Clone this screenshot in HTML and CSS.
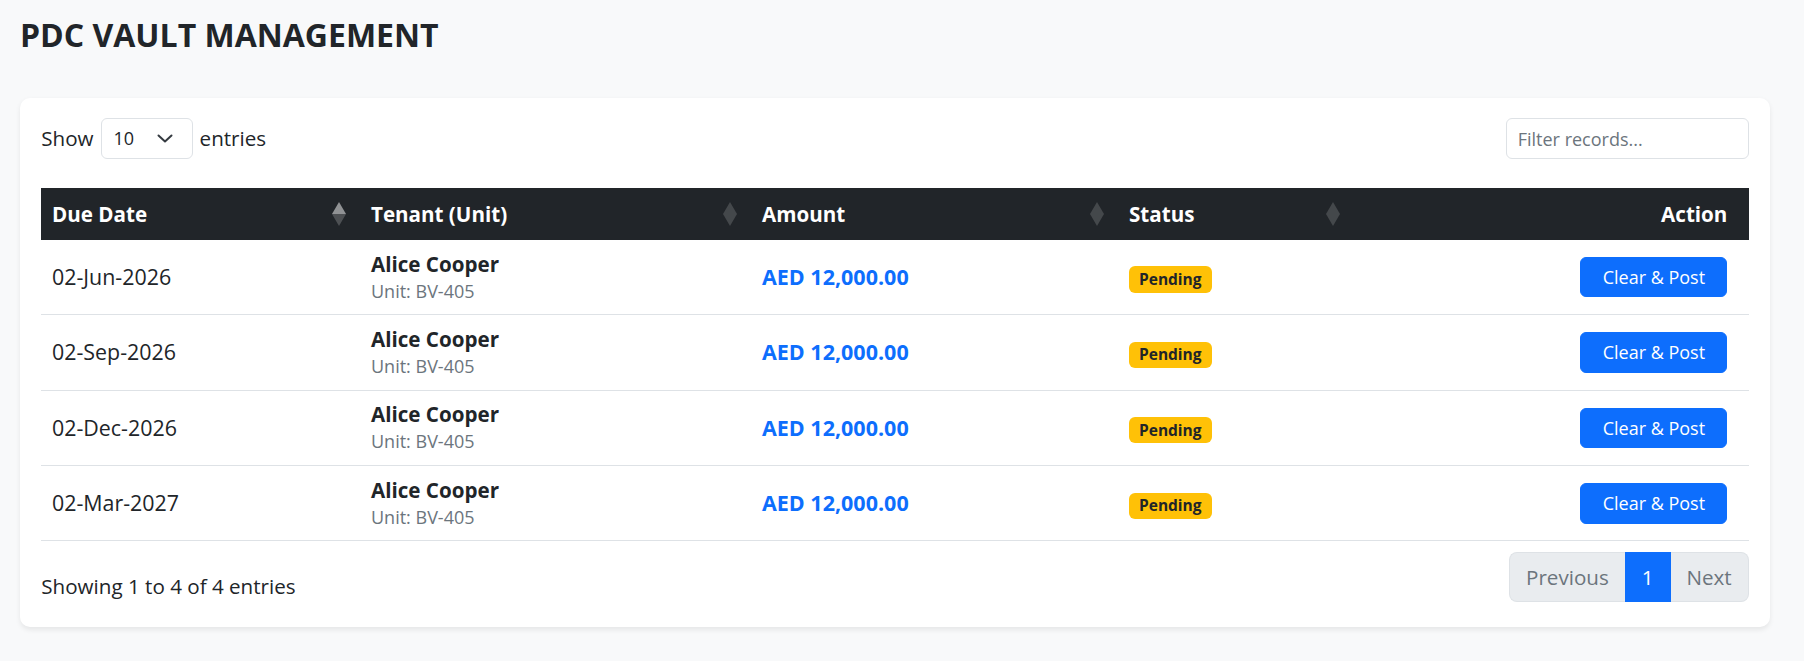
FILE: index.html
```html
<!DOCTYPE html>
<html lang="en">
<head>
<meta charset="utf-8">
<title>PDC Vault Management</title>
<link rel="stylesheet" href="styles.css">
</head>
<body>
<main class="page">
  <h1 class="page-title">PDC VAULT MANAGEMENT</h1>

  <section class="card">
    <div class="toolbar">
      <div class="length">
        <span>Show</span>
        <div class="select">
          <span>10</span>
          <svg class="chevron" width="16" height="9" viewBox="0 0 16 9" aria-hidden="true">
            <path d="M1.5 1.5 L8 7.5 L14.5 1.5" fill="none" stroke="#343a40" stroke-width="2" stroke-linecap="round" stroke-linejoin="round"/>
          </svg>
        </div>
        <span>entries</span>
      </div>
      <input class="filter" type="search" placeholder="Filter records...">
    </div>

    <table class="vault">
      <colgroup>
        <col class="col-date">
        <col class="col-tenant">
        <col class="col-amount">
        <col class="col-status">
        <col class="col-action">
      </colgroup>
      <thead>
        <tr>
          <th class="sortable">
            <div class="th-inner">
              <span>Due Date</span>
              <svg class="sort asc" width="14" height="24" viewBox="0 0 14 24" aria-hidden="true">
                <polygon class="up" points="7,0 14,12 0,12"/>
                <polygon class="down" points="0,12 14,12 7,24"/>
              </svg>
            </div>
          </th>
          <th class="sortable">
            <div class="th-inner">
              <span>Tenant (Unit)</span>
              <svg class="sort" width="14" height="24" viewBox="0 0 14 24" aria-hidden="true">
                <polygon class="up" points="7,0 14,12 0,12"/>
                <polygon class="down" points="0,12 14,12 7,24"/>
              </svg>
            </div>
          </th>
          <th class="sortable">
            <div class="th-inner">
              <span>Amount</span>
              <svg class="sort" width="14" height="24" viewBox="0 0 14 24" aria-hidden="true">
                <polygon class="up" points="7,0 14,12 0,12"/>
                <polygon class="down" points="0,12 14,12 7,24"/>
              </svg>
            </div>
          </th>
          <th class="sortable">
            <div class="th-inner">
              <span>Status</span>
              <svg class="sort" width="14" height="24" viewBox="0 0 14 24" aria-hidden="true">
                <polygon class="up" points="7,0 14,12 0,12"/>
                <polygon class="down" points="0,12 14,12 7,24"/>
              </svg>
            </div>
          </th>
          <th class="action">Action</th>
        </tr>
      </thead>
      <tbody>
        <tr>
          <td class="date">02-Jun-2026</td>
          <td><div class="tenant">Alice Cooper</div><div class="unit">Unit: BV-405</div></td>
          <td class="amount">AED 12,000.00</td>
          <td><span class="badge">Pending</span></td>
          <td class="action"><button class="btn" type="button">Clear &amp; Post</button></td>
        </tr>
        <tr>
          <td class="date">02-Sep-2026</td>
          <td><div class="tenant">Alice Cooper</div><div class="unit">Unit: BV-405</div></td>
          <td class="amount">AED 12,000.00</td>
          <td><span class="badge">Pending</span></td>
          <td class="action"><button class="btn" type="button">Clear &amp; Post</button></td>
        </tr>
        <tr>
          <td class="date">02-Dec-2026</td>
          <td><div class="tenant">Alice Cooper</div><div class="unit">Unit: BV-405</div></td>
          <td class="amount">AED 12,000.00</td>
          <td><span class="badge">Pending</span></td>
          <td class="action"><button class="btn" type="button">Clear &amp; Post</button></td>
        </tr>
        <tr>
          <td class="date">02-Mar-2027</td>
          <td><div class="tenant">Alice Cooper</div><div class="unit">Unit: BV-405</div></td>
          <td class="amount">AED 12,000.00</td>
          <td><span class="badge">Pending</span></td>
          <td class="action"><button class="btn" type="button">Clear &amp; Post</button></td>
        </tr>
      </tbody>
    </table>

    <div class="footer">
      <div class="info">Showing 1 to 4 of 4 entries</div>
      <nav class="pager" aria-label="Pagination">
        <span class="page-item disabled first">Previous</span>
        <span class="page-item active">1</span>
        <span class="page-item disabled last">Next</span>
      </nav>
    </div>
  </section>
</main>
</body>
</html>
```

FILE: styles.css
```css
* {
  box-sizing: border-box;
}

html,
body {
  margin: 0;
  padding: 0;
}

body {
  background: #f8f9fa;
  color: #212529;
  font-family: "Open Sans", "Noto Sans", "Liberation Sans", sans-serif;
  font-size: 20.6px;
  line-height: 1.5;
}

.page {
  padding: 16px 34px 30px 20px;
}

.page-title {
  margin: 0 0 44px 0;
  font-size: 32px;
  font-weight: 700;
  line-height: 1.2;
  letter-spacing: 0;
}

/* card */
.card {
  background: #fff;
  border-radius: 10px;
  box-shadow: 0 2.7px 5.3px rgba(0, 0, 0, 0.075);
  padding: 20px 21.3px 25px 21.3px;
}

/* length menu + search */
.toolbar {
  display: flex;
  justify-content: space-between;
  align-items: center;
  margin-bottom: 28.5px;
}

.length {
  display: flex;
  align-items: center;
  gap: 7px;
}

.select {
  width: 92px;
  height: 41px;
  display: flex;
  align-items: center;
  justify-content: space-between;
  padding: 0 19px 0 12px;
  border: 1px solid #dee2e6;
  border-radius: 6px;
  background: #fff;
  font-size: 18px;
}

.chevron {
  display: block;
}

.filter {
  width: 243px;
  height: 41px;
  padding: 0 11px;
  border: 1px solid #dee2e6;
  border-radius: 6px;
  font-family: inherit;
  font-size: 18px;
  color: #212529;
  background: #fff;
  outline: none;
}

.filter::placeholder {
  color: #6c757d;
}

/* table */
.vault {
  width: 100%;
  border-collapse: collapse;
  table-layout: fixed;
}

.col-date { width: 319px; }
.col-tenant { width: 391px; }
.col-amount { width: 367px; }
.col-status { width: 236px; }

.vault th {
  background: #212529;
  color: #fff;
  font-weight: 700;
  text-align: left;
  line-height: 32px;
  padding: 10px 10.7px;
  white-space: nowrap;
}

.vault th.sortable {
  padding-right: 14.6px;
}

.th-inner {
  display: flex;
  align-items: center;
  justify-content: space-between;
}

.sort {
  display: block;
  flex: none;
}

.sort polygon {
  fill: rgba(255, 255, 255, 0.16);
}

.sort.asc .up {
  fill: rgba(255, 255, 255, 0.5);
}

.sort.asc .down {
  fill: rgba(255, 255, 255, 0.2);
}

.vault td {
  padding: 10.7px;
  vertical-align: middle;
  border-bottom: 1px solid #dee2e6;
  line-height: 32px;
}

.vault td.date {
  font-size: 21.4px;
}

.vault .action {
  text-align: right;
  padding-right: 21.3px;
}

.tenant {
  font-weight: 700;
  line-height: 27px;
}

.unit {
  font-size: 18px;
  line-height: 26px;
  color: #6c757d;
}

.vault td.amount {
  color: #0d6efd;
  font-weight: 700;
  font-size: 21.5px;
}

.badge {
  display: inline-block;
  font-size: 15.5px;
  font-weight: 700;
  line-height: 1;
  padding: 5.4px 10px;
  border-radius: 6px;
  background: #ffc107;
  color: #212529;
  vertical-align: middle;
}

.btn {
  display: inline-block;
  font-family: inherit;
  font-size: 18px;
  line-height: 28px;
  padding: 5.3px 21.3px;
  border: 1px solid #0d6efd;
  border-radius: 6px;
  background: #0d6efd;
  color: #fff;
  cursor: pointer;
  vertical-align: middle;
}

/* info + pagination */
.footer {
  display: flex;
  justify-content: space-between;
  align-items: flex-start;
  margin-top: 11px;
}

.info {
  padding-top: 18px;
  line-height: 32px;
}

.pager {
  display: flex;
}

.page-item {
  display: block;
  padding: 8px 16px;
  line-height: 32px;
  border: 1px solid #dee2e6;
  background: #e9ecef;
  color: #6c757d;
}

.page-item.active {
  background: #0d6efd;
  border-color: #0d6efd;
  color: #fff;
}

.page-item.first {
  border-radius: 8px 0 0 8px;
  border-right: 0;
}

.page-item.last {
  border-radius: 0 8px 8px 0;
  border-left: 0;
}
```
